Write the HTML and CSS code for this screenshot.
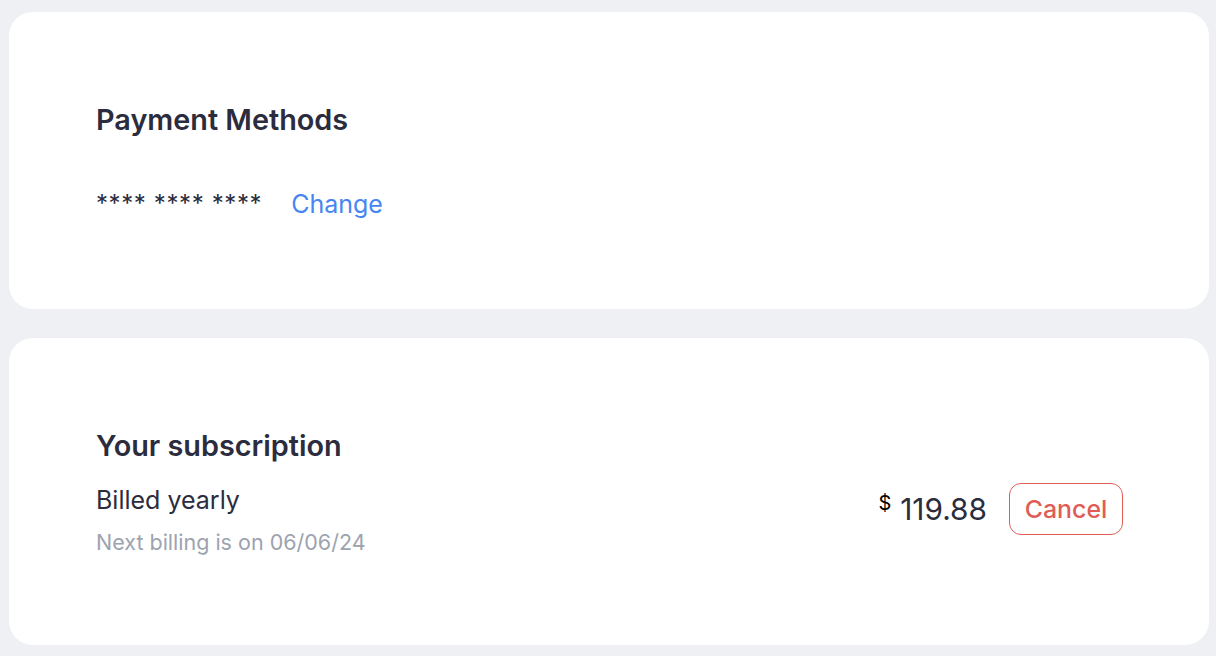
FILE: index.html
```html
<!DOCTYPE html>
<html>
<head>
<meta charset="utf-8">
<link rel="stylesheet" href="styles.css">
</head>
<body>
<div class="page">
  <section class="card card-payment">
    <h2 class="title">Payment Methods</h2>
    <div class="method">
      <span class="mask">**** **** ****</span>
      <a class="change" href="#">Change</a>
    </div>
  </section>
  <section class="card card-sub">
    <div class="sub-row">
      <div class="sub-info">
        <h2 class="title">Your subscription</h2>
        <div class="billed">Billed yearly</div>
        <div class="next">Next billing is on 06/06/24</div>
      </div>
      <div class="sub-actions">
        <div class="price"><span class="cur">$</span><span class="amt">119.88</span></div>
        <button class="cancel">Cancel</button>
      </div>
    </div>
  </section>
</div>
</body>
</html>
```
FILE: styles.css
```css
* { box-sizing: border-box; }
html, body { margin: 0; padding: 0; }
body {
  background: #eff0f3;
  font-family: Inter, "Noto Sans", sans-serif;
  color: #2b2c3d;
}
.page {
  width: 1216px;
  height: 656px;
  padding: 12px 7px 0 9px;
  display: flex;
  flex-direction: column;
  gap: 29px;
  overflow: hidden;
}
.card {
  background: #fff;
  border-radius: 24px;
  padding: 0 86px 0 87px;
}
.card-payment {
  height: 297px;
  padding-top: 90px;
}
.card-sub {
  height: 307px;
  padding-top: 90px;
}
.title {
  margin: 0;
  font-size: 28.8px;
  font-weight: 600;
  line-height: 36px;
  color: #2b2c3d;
}
.method {
  margin-top: 51px;
  display: flex;
  align-items: center;
  gap: 29px;
  font-size: 24px;
  line-height: 30px;
}
.mask { color: #2b2c3d; letter-spacing: 0.6px; }
.change { color: #4786f2; text-decoration: none; font-size: 25px; }
.sub-row {
  display: flex;
  align-items: center;
  justify-content: space-between;
}
.billed {
  margin-top: 21px;
  font-size: 25px;
  line-height: 30px;
}
.next {
  margin-top: 14px;
  font-size: 21.5px;
  line-height: 26px;
  color: #9ca3af;
}
.sub-actions {
  display: flex;
  align-items: center;
  gap: 22px;
  margin-top: 34px;
}
.price { display: flex; align-items: flex-start; gap: 9px; }
.cur { font-size: 20px; color: #000; line-height: 20px; }
.amt { font-size: 29.8px; line-height: 32px; color: #2b2c3d; }
.cancel {
  font-family: inherit;
  background: #fff;
  border: 1px solid #e05d57;
  color: #e05d57;
  border-radius: 12px;
  font-size: 24.9px;
  font-weight: 500;
  height: 52px;
  width: 114px;
  padding: 0;
}
```
